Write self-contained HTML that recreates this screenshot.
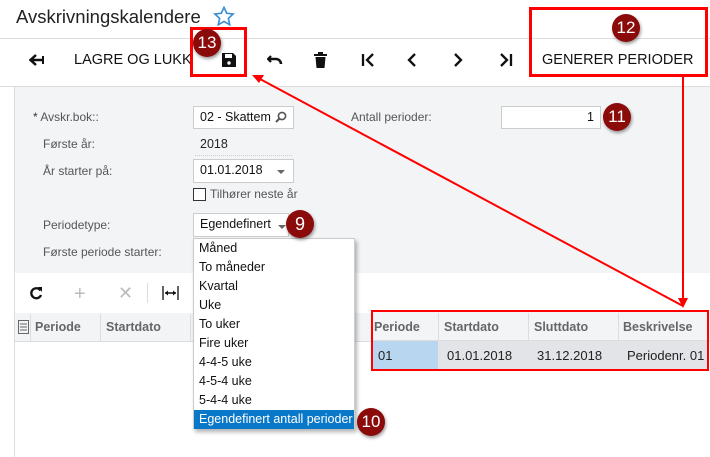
<!DOCTYPE html>
<html><head><meta charset="utf-8"><style>
*{margin:0;padding:0;box-sizing:border-box}
body{width:710px;height:457px;overflow:hidden;background:#fff;font-family:"Liberation Sans",Arial,sans-serif;position:relative;color:#222}
.a{position:absolute}
.lbl{position:absolute;font-size:12px;color:#555}
.inp{position:absolute;background:#fff;border:1px solid #ccc;font-size:12.5px;color:#111;padding:3px 6px}
.c{position:absolute;width:28px;height:28px;border-radius:50%;background:#8b0a0a;color:#fff;font-size:18px;text-align:center;line-height:28px;box-shadow:1px 2px 3px rgba(0,0,0,.4)}
.rb{position:absolute;border:3px solid #f00}
.tb{position:absolute;font-size:14.5px;color:#111}
.dd div{height:19px;line-height:19px;padding-left:5px;font-size:12.5px;color:#111}
.th{position:absolute;font-size:12.5px;color:#666;font-weight:bold}
</style></head><body>
<div class="a" style="left:16px;top:6px;font-size:18.5px;color:#222">Avskrivningskalendere</div>
<svg class="a" style="left:213px;top:6px" width="22" height="20" viewBox="0 0 24 22"><path d="M12 1.5l3 6.5 7 .8-5.2 4.8 1.5 7L12 17l-6.3 3.6 1.5-7L2 8.8l7-.8z" fill="none" stroke="#3a8fd6" stroke-width="1.8"/></svg>
<div class="a" style="left:0;top:38px;width:710px;height:1px;background:#ddd"></div>
<div class="a" style="left:0;top:86px;width:710px;height:1px;background:#ddd"></div>
<svg class="a" style="left:29px;top:53px" width="16" height="14"><path d="M1 7h14M7 2L1.5 7 7 12" stroke="#111" stroke-width="2.5" fill="none"/><path d="M14 3v8" stroke="#111" stroke-width="2"/></svg>
<div class="tb" style="left:74px;top:52px">LAGRE OG LUKK</div>
<svg class="a" style="left:222px;top:53px" width="14" height="14"><path d="M0 0h11l3 3v11H0z" fill="#111"/><rect x="3" y="1" width="7" height="4" fill="#fff"/><circle cx="7" cy="10" r="1.7" fill="#fff"/></svg>
<svg class="a" style="left:267px;top:54px" width="16" height="12"><path d="M4 2L1 5l3 3" stroke="#111" stroke-width="2.2" fill="none"/><path d="M1.5 5H9a5 5 0 0 1 5 5" stroke="#111" stroke-width="2.5" fill="none"/></svg>
<svg class="a" style="left:314px;top:52px" width="13" height="16"><path d="M0 2h13v2H0zM4 0h5v2H4zM1.5 5h10l-1 11h-8z" fill="#111"/></svg>
<svg class="a" style="left:361px;top:53px" width="14" height="14"><path d="M2 1v12" stroke="#111" stroke-width="2.3"/><path d="M12 1L6 7l6 6" stroke="#111" stroke-width="2.3" fill="none"/></svg>
<svg class="a" style="left:406px;top:53px" width="12" height="14"><path d="M9 1L3 7l6 6" stroke="#111" stroke-width="2.3" fill="none"/></svg>
<svg class="a" style="left:452px;top:53px" width="12" height="14"><path d="M3 1l6 6-6 6" stroke="#111" stroke-width="2.3" fill="none"/></svg>
<svg class="a" style="left:499px;top:53px" width="14" height="14"><path d="M2 1l6 6-6 6" stroke="#111" stroke-width="2.3" fill="none"/><path d="M12 1v12" stroke="#111" stroke-width="2.3"/></svg>
<div class="tb" style="left:542px;top:52px">GENERER PERIODER</div>
<div class="a" style="left:14px;top:87px;width:696px;height:186px;background:#f3f4f6"></div>
<div class="a" style="left:14px;top:87px;width:1px;height:370px;background:#ddd"></div>
<div class="lbl" style="left:33px;top:110px"><span style="color:#333">*</span> Avskr.bok::</div>
<div class="inp" style="left:193px;top:106px;width:101px;height:23px">02 - Skattem</div>
<svg class="a" style="left:275px;top:111px" width="12" height="12"><circle cx="7" cy="5" r="3.6" stroke="#555" stroke-width="1.6" fill="none"/><path d="M4.5 7.5L1 11" stroke="#555" stroke-width="2"/></svg>
<div class="lbl" style="left:351px;top:110px">Antall perioder:</div>
<div class="inp" style="left:501px;top:106px;width:100px;height:23px;text-align:right">1</div>
<div class="lbl" style="left:43px;top:137px">Første år:</div>
<div class="a" style="left:200px;top:137px;font-size:12.5px">2018</div>
<div class="a" style="left:195px;top:155px;width:97px;border-top:1px dotted #ccc"></div>
<div class="lbl" style="left:43px;top:164px">År starter på:</div>
<div class="inp" style="left:193px;top:159px;width:101px;height:24px">01.01.2018</div>
<div class="a" style="left:277px;top:170px;border:4px solid transparent;border-top:4px solid #666"></div>
<div class="a" style="left:193px;top:188px;width:13px;height:13px;border:1px solid #333;background:#fff"></div>
<div class="lbl" style="left:210px;top:187px">Tilhører neste år</div>
<div class="lbl" style="left:43px;top:218px">Periodetype:</div>
<div class="inp" style="left:193px;top:213px;width:96px;height:24px">Egendefinert</div>
<div class="a" style="left:278px;top:225px;border:4px solid transparent;border-top:4px solid #666"></div>
<div class="lbl" style="left:43px;top:245px">Første periode starter:</div>
<svg class="a" style="left:29px;top:286px" width="14" height="14"><path d="M11.5 4.5A5 5 0 1 0 12 9" stroke="#111" stroke-width="2.3" fill="none"/><path d="M9 1l4 0 0 5z" fill="#111"/></svg>
<div class="a" style="left:74px;top:283px;font-size:20px;color:#bbb">+</div>
<div class="a" style="left:118px;top:283px;font-size:18px;color:#bbb">✕</div>
<div class="a" style="left:147px;top:283px;width:1px;height:20px;background:#ddd"></div>
<svg class="a" style="left:162px;top:286px" width="17" height="14"><path d="M1 0v14M16 0v14" stroke="#111" stroke-width="1.3"/><path d="M3 7h11" stroke="#111" stroke-width="1.5"/><path d="M3 7l3-2.5v5zM14 7l-3-2.5v5z" fill="#111"/></svg>
<div class="a" style="left:15px;top:313px;width:695px;height:29px;background:#f3f4f6;border-bottom:1px solid #ddd"></div>
<svg class="a" style="left:18px;top:320px" width="11" height="14"><rect x=".5" y=".5" width="10" height="13" fill="none" stroke="#666"/><path d="M2 4h7M2 7h7M2 10h7" stroke="#666"/></svg>
<div class="a" style="left:30px;top:314px;width:1px;height:28px;background:#ddd"></div>
<div class="th" style="left:35px;top:320px">Periode</div>
<div class="a" style="left:100px;top:314px;width:1px;height:28px;background:#ddd"></div>
<div class="th" style="left:106px;top:320px">Startdato</div>
<div class="a" style="left:190px;top:314px;width:1px;height:28px;background:#ddd"></div>
<div class="a" style="left:372px;top:312px;width:336px;height:58px;background:#fff"></div>
<div class="a" style="left:372px;top:312px;width:336px;height:29px;background:#f3f4f6;border-bottom:1px solid #ddd"></div>
<div class="th" style="left:374px;top:320px">Periode</div>
<div class="th" style="left:444px;top:320px">Startdato</div>
<div class="th" style="left:534px;top:320px">Sluttdato</div>
<div class="th" style="left:623px;top:320px">Beskrivelse</div>
<div class="a" style="left:438px;top:313px;width:1px;height:28px;background:#ddd"></div>
<div class="a" style="left:528px;top:313px;width:1px;height:28px;background:#ddd"></div>
<div class="a" style="left:618px;top:313px;width:1px;height:28px;background:#ddd"></div>
<div class="a" style="left:372px;top:341px;width:336px;height:28px;background:#e2e4e8"></div>
<div class="a" style="left:372px;top:341px;width:66px;height:28px;background:#b8d6ef"></div>
<div class="a" style="left:378px;top:348px;font-size:13px">01</div>
<div class="a" style="left:447px;top:348px;font-size:13px">01.01.2018</div>
<div class="a" style="left:537px;top:348px;font-size:13px">31.12.2018</div>
<div class="a" style="left:627px;top:348px;font-size:13px">Periodenr. 01</div>
<div class="rb" style="left:371px;top:310px;width:338px;height:61px;border-width:2px"></div>
<div class="a dd" style="left:193px;top:238px;width:162px;height:191px;background:#fff;border:1px solid #ccc;box-shadow:2px 3px 4px rgba(0,0,0,.3);padding-top:0">
<div>Måned</div><div>To måneder</div><div>Kvartal</div><div>Uke</div><div>To uker</div><div>Fire uker</div><div>4-4-5 uke</div><div>4-5-4 uke</div><div>5-4-4 uke</div><div style="background:#0a78c8;color:#fff">Egendefinert antall perioder</div></div>
<div class="rb" style="left:190px;top:27px;width:57px;height:50px"></div>
<div class="rb" style="left:529px;top:7px;width:179px;height:70px"></div>
<svg class="a" style="left:0;top:0" width="710" height="457"><path d="M683 77V300" stroke="#f00" stroke-width="2"/><path d="M678 298l5 10 5-10z" fill="#f00"/><path d="M683 306L260 79" stroke="#f00" stroke-width="2"/><path d="M252 75l12 0-5 8z" fill="#f00"/></svg>
<div class="c" style="left:193px;top:29px;font-size:17px">13</div>
<div class="c" style="left:612px;top:14px;font-size:17px">12</div>
<div class="c" style="left:603px;top:103px;font-size:17px">11</div>
<div class="c" style="left:286px;top:210px">9</div>
<div class="c" style="left:357px;top:408px;font-size:17px">10</div>
</body></html>
